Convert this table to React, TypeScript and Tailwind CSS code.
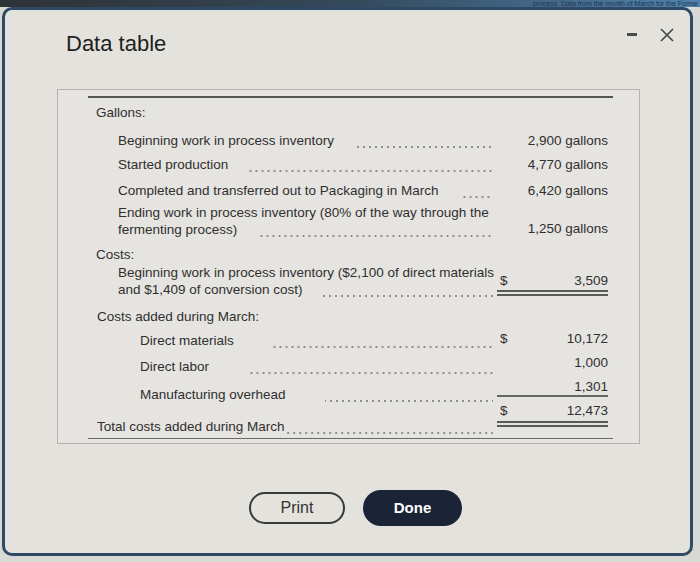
import React from "react";

function Leader({ className }: { className: string }) {
  return (
    <span
      className={`block h-[17px] shrink-0 bg-[radial-gradient(circle,#8f8f8f_0.9px,transparent_1.3px)] bg-[length:6px_4px] bg-bottom bg-repeat-x ${className}`}
    />
  );
}

function DoubleRule() {
  return (
    <div className="mt-[1px]">
      <div className="h-[2px] bg-[#5a5a5a]" />
      <div className="mt-[1.5px] h-[2px] bg-[#5a5a5a]" />
    </div>
  );
}

export default function App() {
  return (
    <div className="relative h-[562px] w-[700px] overflow-hidden bg-[#d8d8d5] font-['Liberation_Sans',Arial,sans-serif] text-[#2f2f2f]">
      {/* page behind the dialog, mostly hidden */}
      <div className="flex h-[7px] items-center overflow-hidden bg-gradient-to-r from-[#2e3235] via-[#34495b] to-[#4f82ad]">
        <div className="ml-auto whitespace-nowrap pr-[2px] text-[7px] leading-[7px] text-[#1d3550]">
          process. Data from the month of March for the Forme
        </div>
      </div>

      <div className="ml-[2px] h-[549px] w-[691px] rounded-[10px] border-[3px] border-[#2d4965] bg-[#e4e2dd]">
        <div className="flex items-start justify-between pl-[61px] pr-[16px] pt-[18px]">
          <h1 className="mt-[3px] text-[22px] leading-[26px] text-[#1e1e1e]">Data table</h1>
          <div className="flex h-[13px] items-center gap-[23px]">
            <span className="block h-[3px] w-[10px] bg-[#4a4a4a]" />
            <svg width="14" height="14" viewBox="0 0 14 14" className="text-[#444]">
              <path d="M1 1L13 13M13 1L1 13" stroke="currentColor" strokeWidth="1.6" />
            </svg>
          </div>
        </div>

        <div className="ml-[52px] mt-[32px] w-[583px] border border-[#b3b2ae] bg-[#e6e4e0] pb-[4px] pl-[30px] pr-[26px] pt-[6px] text-[13.5px] leading-[17px]">
          <div className="h-[2px] bg-[#555]" />

          <div className="grid h-[28px] grid-cols-[409px_111px]">
            <div className="pl-[8px] pt-[6px]">Gallons:</div>
            <div />
          </div>

          <div className="grid h-[24px] grid-cols-[409px_111px]">
            <div className="flex pl-[30px] pr-[4px] pt-[6px]">
              <span>Beginning work in process inventory</span>
              <Leader className="ml-auto w-[138px]" />
            </div>
            <div className="pt-[6px] text-right">2,900 gallons</div>
          </div>

          <div className="grid h-[26px] grid-cols-[409px_111px]">
            <div className="flex pl-[30px] pr-[4px] pt-[6px]">
              <span>Started production</span>
              <Leader className="ml-auto w-[245px]" />
            </div>
            <div className="pt-[6px] text-right">4,770 gallons</div>
          </div>

          <div className="grid h-[24px] grid-cols-[409px_111px]">
            <div className="flex pl-[30px] pr-[4px] pt-[6px]">
              <span>Completed and transferred out to Packaging in March</span>
              <Leader className="ml-auto w-[33px]" />
            </div>
            <div className="pt-[6px] text-right">6,420 gallons</div>
          </div>

          <div className="grid h-[40px] grid-cols-[409px_111px]">
            <div className="pl-[30px] pr-[4px] pt-[4px]">
              <div className="whitespace-nowrap">Ending work in process inventory (80% of the way through the</div>
              <div className="flex">
                <span>fermenting process)</span>
                <Leader className="ml-auto w-[235px]" />
              </div>
            </div>
            <div className="pt-[20px] text-right">1,250 gallons</div>
          </div>

          <div className="grid h-[22px] grid-cols-[409px_111px]">
            <div className="pl-[8px] pt-[6px]">Costs:</div>
            <div />
          </div>

          <div className="grid h-[40px] grid-cols-[409px_111px]">
            <div className="pl-[30px] pr-[4px] pt-[2px]">
              <div className="whitespace-nowrap">Beginning work in process inventory ($2,100 of direct materials</div>
              <div className="flex">
                <span>and $1,409 of conversion cost)</span>
                <Leader className="ml-auto w-[170px]" />
              </div>
            </div>
            <div className="pt-[10px]">
              <div className="flex justify-between pl-[3px]">
                <span>$</span>
                <span>3,509</span>
              </div>
              <DoubleRule />
            </div>
          </div>

          <div className="grid h-[24px] grid-cols-[409px_111px]">
            <div className="pl-[9px] pt-[6px]">Costs added during March:</div>
            <div />
          </div>

          <div className="grid h-[26px] grid-cols-[409px_111px]">
            <div className="flex pl-[52px] pr-[4px] pt-[6px]">
              <span>Direct materials</span>
              <Leader className="ml-auto w-[221px]" />
            </div>
            <div className="flex justify-between pl-[3px] pt-[4px]">
              <span>$</span>
              <span>10,172</span>
            </div>
          </div>

          <div className="grid h-[26px] grid-cols-[409px_111px]">
            <div className="flex pl-[52px] pr-[4px] pt-[6px]">
              <span>Direct labor</span>
              <Leader className="ml-auto w-[243px]" />
            </div>
            <div className="pt-[2px] text-right">1,000</div>
          </div>

          <div className="grid h-[24px] grid-cols-[409px_111px]">
            <div className="flex pl-[52px] pr-[4px] pt-[8px]">
              <span>Manufacturing overhead</span>
              <Leader className="ml-auto w-[168px]" />
            </div>
            <div>
              <div className="text-right">1,301</div>
              <div className="h-[2px] bg-[#666]" />
            </div>
          </div>

          <div className="grid h-[36px] grid-cols-[409px_111px]">
            <div className="flex pl-[9px] pr-[4px] pt-[16px]">
              <span>Total costs added during March</span>
              <Leader className="ml-[2px] flex-1" />
            </div>
            <div>
              <div className="flex justify-between pl-[3px]">
                <span>$</span>
                <span>12,473</span>
              </div>
              <div className="mt-[2px]">
                <DoubleRule />
              </div>
            </div>
          </div>

          <div className="h-px bg-[#6a6a6a]" />
        </div>

        <div className="mt-[46px] flex items-center justify-center gap-[18px] pl-[16px]">
          <button className="h-[32px] w-[96px] rounded-full border-2 border-[#383838] text-[16px] text-[#333]">
            Print
          </button>
          <button className="h-[36px] w-[99px] rounded-full bg-[#1b2436] text-[15px] font-bold text-white">
            Done
          </button>
        </div>
      </div>
    </div>
  );
}
